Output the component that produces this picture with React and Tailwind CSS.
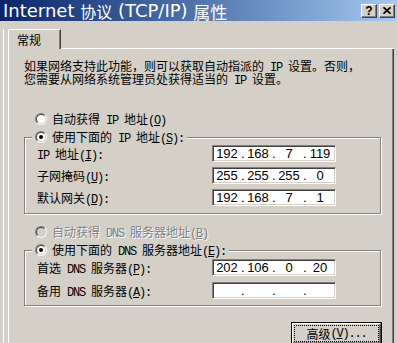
import React from 'react';

// half-width run (SimSun-like latin: 6px per char)
const H = ({ children }) => (
  <span className="whitespace-pre font-['Liberation_Mono',monospace] leading-[0] tracking-[-1.2px]">{children}</span>
);

function Radio({ checked, disabled }) {
  return (
    <span className="flex h-[12px] w-[12px] shrink-0 rounded-full border border-t-[#808080] border-l-[#808080] border-r-white border-b-white">
      <span
        className={`flex flex-1 items-center justify-center rounded-full border border-t-[#404040] border-l-[#404040] border-r-[#d4d0c8] border-b-[#d4d0c8] ${
          disabled ? 'bg-[#d4d0c8]' : 'bg-white'
        }`}
      >
        {checked && <span className="h-[4px] w-[4px] rounded-full bg-black" />}
      </span>
    </span>
  );
}

function IpBox({ parts }) {
  return (
    <div className="flex h-[17px] w-[124px] items-center border border-t-[#808080] border-l-[#808080] border-r-white border-b-white bg-white font-['Liberation_Sans',sans-serif] text-[13px] leading-none text-black shadow-[inset_1px_1px_0_#404040,inset_-1px_-1px_0_#d4d0c8]">
      {parts.map((p, i) => (
        <React.Fragment key={i}>
          {i > 0 && <span className="w-[3px] text-center">.</span>}
          <span className="w-[28px] text-center">{p}</span>
        </React.Fragment>
      ))}
    </div>
  );
}

function Row({ label, parts }) {
  return (
    <div className="flex h-[17px] items-center justify-between">
      <span className="leading-[14px]">{label}</span>
      <IpBox parts={parts} />
    </div>
  );
}

export default function App() {
  return (
    <div className="h-[343px] w-[397px] overflow-hidden bg-[#d4d0c8] font-['Noto_Sans_CJK_SC',sans-serif] text-[12px] text-black">
      {/* title bar */}
      <div className="flex h-[21px] items-center justify-between bg-gradient-to-r from-[#0a246a] to-[#a6caf0] pl-[3px] pr-[2px]">
        <div className="flex items-center pt-[1px] font-['DejaVu_Sans','Noto_Sans_CJK_SC',sans-serif] text-[18px] leading-none whitespace-pre text-white">
          <span>Internet </span>
          <span className="font-['Noto_Sans_CJK_SC',sans-serif] text-[16px]">协议</span>
          <span> (TCP/IP) </span>
          <span className="font-['Noto_Sans_CJK_SC',sans-serif] text-[17px]">属性</span>
        </div>
        <div className="flex gap-[2px]">
          <div className="flex h-[14px] w-[16px] items-center justify-center border border-t-white border-l-white border-r-[#404040] border-b-[#404040] bg-[#d4d0c8] font-['Liberation_Sans',sans-serif] text-[12px] leading-none font-bold shadow-[inset_-1px_-1px_0_#808080]">
            ?
          </div>
          <div className="flex h-[14px] w-[16px] items-center justify-center border border-t-white border-l-white border-r-[#404040] border-b-[#404040] bg-[#d4d0c8] shadow-[inset_-1px_-1px_0_#808080]">
            <svg width="8" height="7" viewBox="0 0 8 7">
              <path d="M0.5 0.3 L7.5 6.7 M7.5 0.3 L0.5 6.7" stroke="#000" strokeWidth="1.7" />
            </svg>
          </div>
        </div>
      </div>

      {/* body */}
      <div className="pl-[3px] pr-[3px] pt-[8px]">
        <div className="border-l border-white pl-[4px]">
          {/* tab row */}
          <div className="flex h-[20px] items-stretch">
            <div className="flex w-[53px] items-center rounded-tl-[2px] border-t border-l border-r border-t-white border-l-white border-r-[#404040] pl-[8px] leading-[14px] shadow-[inset_-1px_0_0_#808080]">
              常规
            </div>
            <div className="flex-1 border-b border-white" />
          </div>

          {/* panel */}
          <div className="h-[300px] border-l border-r border-l-white border-r-[#404040] pl-[15px] pr-[12px] pt-[10px] shadow-[inset_-1px_0_0_#808080]">
            <p className="leading-[13px]">
              如果网络支持此功能，则可以获取自动指派的<H> IP </H>设置。否则，
              <br />
              您需要从网络系统管理员处获得适当的<H> IP </H>设置。
            </p>

            <div className="mt-[27px] ml-[11px] flex h-[14px] items-center gap-[5px]">
              <Radio />
              <span className="leading-[14px]">
                自动获得<H> IP </H>地址<H>(<u>O</u>)</H>
              </span>
            </div>

            <div className="relative mt-[11px] flex flex-col gap-[5px] border border-[#808080] pt-[7px] pb-[7px] pl-[12px] pr-[44px] shadow-[inset_1px_1px_0_#fff,1px_1px_0_#fff]">
              <div className="absolute left-[7px] top-[-8px] flex h-[14px] items-center gap-[5px] bg-[#d4d0c8] px-[3px]">
                <Radio checked />
                <span className="leading-[14px]">
                  使用下面的<H> IP </H>地址<H>(<u>S</u>):</H>
                </span>
              </div>
              <Row label={<><H>IP </H>地址<H>(<u>I</u>):</H></>} parts={['192', '168', '7', '119']} />
              <Row label={<>子网掩码<H>(<u>U</u>):</H></>} parts={['255', '255', '255', '0']} />
              <Row label={<>默认网关<H>(<u>D</u>):</H></>} parts={['192', '168', '7', '1']} />
            </div>

            <div className="mt-[11px] ml-[11px] flex h-[14px] items-center gap-[5px]">
              <Radio disabled />
              <span className="leading-[14px] text-[#808080] [text-shadow:1px_1px_0_#fff]">
                自动获得<H> DNS </H>服务器地址<H>(<u>B</u>)</H>
              </span>
            </div>

            <div className="relative mt-[11px] flex flex-col gap-[6px] border border-[#808080] pt-[8px] pb-[6px] pl-[12px] pr-[44px] shadow-[inset_1px_1px_0_#fff,1px_1px_0_#fff]">
              <div className="absolute left-[7px] top-[-8px] flex h-[14px] items-center gap-[5px] bg-[#d4d0c8] px-[3px]">
                <Radio checked />
                <span className="leading-[14px]">
                  使用下面的<H> DNS </H>服务器地址<H>(<u>E</u>):</H>
                </span>
              </div>
              <Row label={<>首选<H> DNS </H>服务器<H>(<u>P</u>):</H></>} parts={['202', '106', '0', '20']} />
              <Row label={<>备用<H> DNS </H>服务器<H>(<u>A</u>):</H></>} parts={['', '', '', '']} />
            </div>

            <div className="mt-[16px] flex justify-end">
              <div className="mr-[-1px] flex h-[23px] w-[91px] border border-black">
                <div className="flex flex-1 border border-t-white border-l-white border-r-[#404040] border-b-[#404040] p-[1px] shadow-[inset_-1px_-1px_0_#808080]">
                  <div className="flex flex-1 items-center justify-center border border-dotted border-black leading-[14px]">
                    高级<H>(<u>V</u>)...</H>
                  </div>
                </div>
              </div>
            </div>
          </div>
        </div>
      </div>
    </div>
  );
}
